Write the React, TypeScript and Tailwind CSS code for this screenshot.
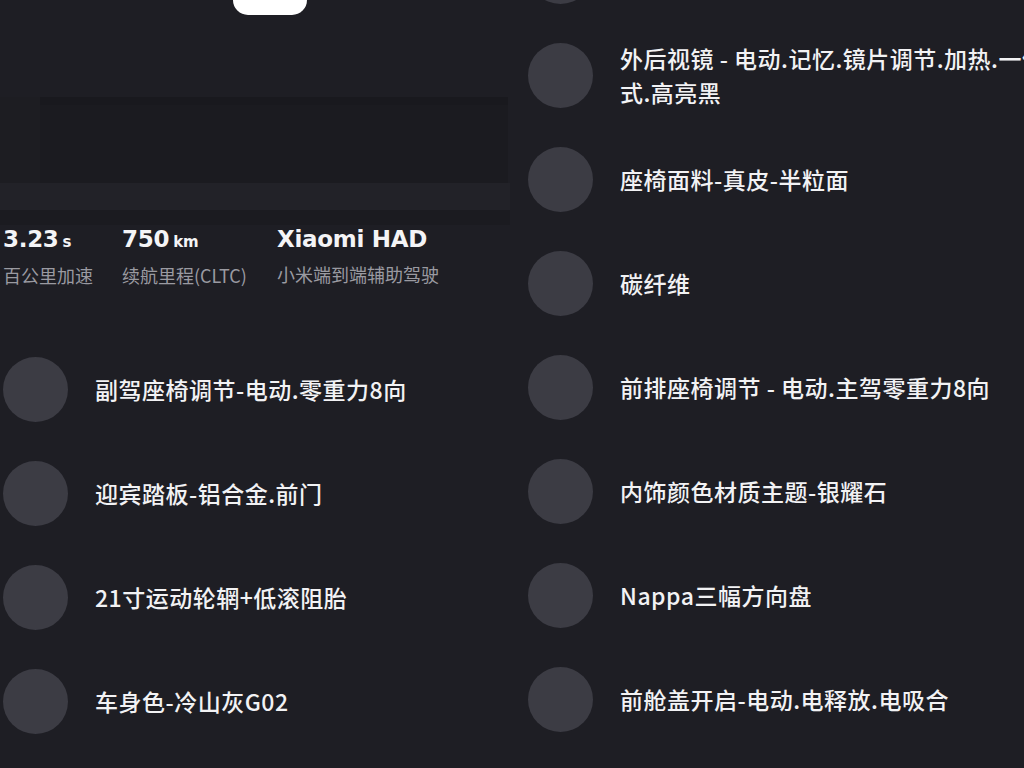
import React from 'react';

const leftItems = [
  '副驾座椅调节-电动.零重力8向',
  '迎宾踏板-铝合金.前门',
  '21寸运动轮辋+低滚阻胎',
  '车身色-冷山灰G02',
];

const rightItems = [
  '',
  '外后视镜 - 电动.记忆.镜片调节.加热.一体式.高亮黑',
  '座椅面料-真皮-半粒面',
  '碳纤维',
  '前排座椅调节 - 电动.主驾零重力8向',
  '内饰颜色材质主题-银耀石',
  'Nappa三幅方向盘',
  '前舱盖开启-电动.电释放.电吸合',
  '',
];

const stats = [
  { value: '3.23', unit: 's', label: '百公里加速', width: 'w-[119px]' },
  { value: '750', unit: 'km', label: '续航里程(CLTC)', width: 'w-[155px]' },
  { value: 'Xiaomi HAD', unit: '', label: '小米端到端辅助驾驶', width: 'w-[220px]' },
];

const cjk = { fontFamily: '"Noto Sans CJK SC", "Noto Sans", sans-serif' };
const latin = { fontFamily: '"DejaVu Sans", "Noto Sans CJK SC", sans-serif' };

const Row = ({ text }: { text: string }) => (
  <div className="flex h-[104px] shrink-0 items-center gap-[27px]">
    <div className="h-[65px] w-[65px] shrink-0 rounded-full bg-[#3c3c44]" />
    {text && (
      <p
        className="w-[440px] text-[23px] font-medium leading-[34px] tracking-[0.5px] text-[#f2f2f4]"
        style={cjk}
      >
        {text}
      </p>
    )}
  </div>
);

export default function App() {
  return (
    <div className="h-[768px] w-[1024px] overflow-hidden bg-[#1e1e24]">
      <div className="flex w-[1080px]">
        {/* Left column */}
        <div className="w-[512px] shrink-0">
          <div className="ml-[233px] h-[15px] w-[74px] rounded-b-[20px] bg-white" />

          <div className="mt-[82px] flex h-[86px] w-[508px]">
            <div className="w-[40px] bg-[#1d1d22]" />
            <div className="flex-1 border-t-[8px] border-[#19191e] bg-[#1b1b20]" />
          </div>
          <div className="h-[27px] w-[510px] bg-[#222228]" />
          <div className="h-[15px] w-[510px] bg-[#1b1b20]" />

          <div className="flex h-[112px] pl-[3px]">
            {stats.map((s) => (
              <div key={s.label} className={`${s.width} shrink-0`}>
                <div className="flex items-baseline text-[#f4f4f6]" style={latin}>
                  <span className="text-[23px] font-bold leading-[28px] tracking-[-0.3px]">{s.value}</span>
                  {s.unit && <span className="ml-[4px] text-[15px] font-semibold">{s.unit}</span>}
                </div>
                <div className="mt-[9px] text-[18px] leading-[24px] text-[#9a9aa1]" style={cjk}>
                  {s.label}
                </div>
              </div>
            ))}
          </div>

          <div className="flex flex-col pl-[3px]">
            {leftItems.map((t) => (
              <Row key={t} text={t} />
            ))}
          </div>
        </div>

        {/* Right column */}
        <div className="flex w-[568px] shrink-0 flex-col pl-[16px] -mt-[81px]">
          {rightItems.map((t, i) => (
            <Row key={i} text={t} />
          ))}
        </div>
      </div>
    </div>
  );
}
